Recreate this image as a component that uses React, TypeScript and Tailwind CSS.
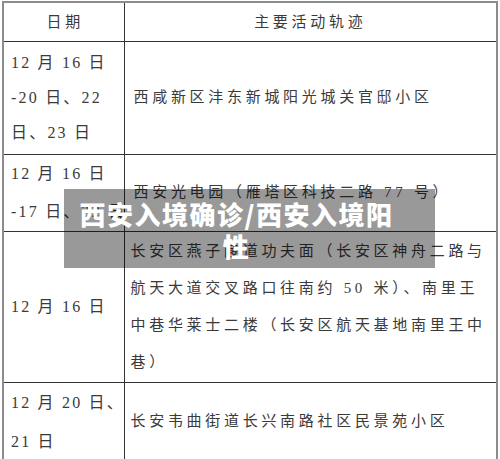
export default function App() {
  const body = "font-['Liberation_Serif','Noto_Sans_CJK_SC',serif] text-[#3a3a3a] text-[15px] tracking-[3.7px]";
  const cell = "border border-[#333] align-middle";
  const date = "whitespace-nowrap overflow-hidden pl-[7px] text-[16px] tracking-[2.2px]";

  return (
    <div className="relative w-[500px] h-[459px] bg-white overflow-hidden pt-[1px] pl-[2px]">
      <table className={`table-fixed border-collapse w-[496px] border-2 border-[#8c8c8c] ${body}`}>
        <colgroup>
          <col className="w-[121px]" />
          <col />
        </colgroup>
        <tbody>
          <tr className="h-[39px]">
            <td className={`${cell} border-t-0 border-l-0 text-center pl-[3px]`}>日期</td>
            <td className={`${cell} border-t-0 border-r-0 text-center`}>主要活动轨迹</td>
          </tr>
          <tr className="h-[113px]">
            <td className={`${cell} ${date} border-l-0 leading-[35px]`}>
              12 月 16 日<br />-20 日、22<br />日、23 日
            </td>
            <td className={`${cell} border-r-0 pl-[9px]`}>西咸新区沣东新城阳光城关官邸小区</td>
          </tr>
          <tr className="h-[76px]">
            <td className={`${cell} ${date} border-l-0 leading-[38px]`}>
              12 月 16 日<br />-17 日、22 日
            </td>
            <td className={`${cell} border-r-0 pl-[9px]`}>西安光电园（雁塔区科技二路 77 号）</td>
          </tr>
          <tr className="h-[151px]">
            <td className={`${cell} ${date} border-l-0`}>12 月 16 日</td>
            <td className={`${cell} border-r-0 pl-[6px] pr-[2px] leading-[37px]`}>
              长安区燕子陵道功夫面（长安区神舟二路与航天大道交叉路口往南约 50 米）、南里王中巷华莱士二楼（长安区航天基地南里王中巷）
            </td>
          </tr>
          <tr className="h-[75px]">
            <td className={`${cell} ${date} border-l-0 border-b-0 leading-[39px]`}>
              12 月 20 日、<br />21 日
            </td>
            <td className={`${cell} border-r-0 border-b-0 pl-[6px]`}>长安韦曲街道长兴南路社区民景苑小区</td>
          </tr>
        </tbody>
      </table>

      <div className="absolute left-[64px] top-[189px] w-[371px] h-[79px] bg-black/40 pl-[12px] pr-[38px] pt-[9px] text-center text-white font-['Noto_Sans_CJK_SC',sans-serif] font-black text-[26px] leading-[32px] tracking-[1.5px]">
        西安入境确诊/西安入境阳性
      </div>
    </div>
  );
}
